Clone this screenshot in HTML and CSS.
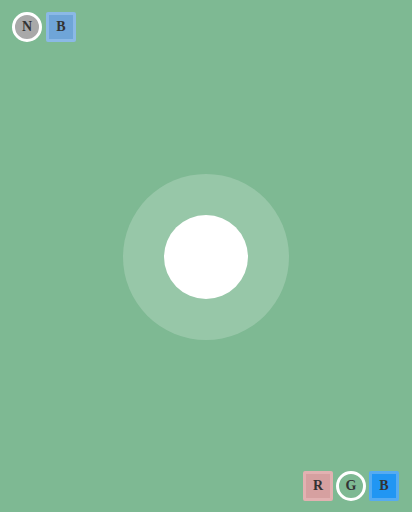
FILE: index.html
```html
<!DOCTYPE html>
<html>
<head>
<meta charset="utf-8">
<link rel="stylesheet" href="styles.css">
</head>
<body>
<div class="screen">
  <div class="toolbar toolbar-top">
    <div class="chip chip-round chip-grey">N</div>
    <div class="chip chip-square chip-steel">B</div>
  </div>
  <div class="stage">
    <div class="halo">
      <div class="dot"></div>
    </div>
  </div>
  <div class="toolbar toolbar-bottom">
    <div class="chip chip-square chip-rose">R</div>
    <div class="chip chip-round chip-clear">G</div>
    <div class="chip chip-square chip-blue">B</div>
  </div>
</div>
</body>
</html>
```
FILE: styles.css
```css
html, body {
  margin: 0;
  padding: 0;
}
body {
  background: #7eb993;
  font-family: "Liberation Serif", "Times New Roman", serif;
}
.screen {
  box-sizing: border-box;
  width: 412px;
  height: 512px;
  padding: 12px 12px 11px 12px;
  display: flex;
  flex-direction: column;
  justify-content: space-between;
}
.toolbar {
  display: flex;
  height: 30px;
}
.toolbar-top {
  gap: 4px;
}
.toolbar-bottom {
  gap: 3px;
  justify-content: flex-end;
  padding-right: 1px;
}
.chip {
  box-sizing: border-box;
  width: 30px;
  height: 30px;
  display: flex;
  align-items: center;
  justify-content: center;
  font-weight: bold;
  font-size: 14px;
  color: #333333;
  border: 3px solid transparent;
}
.chip-round {
  border-radius: 50%;
}
.chip-square {
  border-radius: 2px;
}
.chip-grey {
  background: #a9a9a9;
  border-color: #ffffff;
}
.chip-steel {
  background: #6fa5d8;
  border-color: #8bb9e6;
}
.chip-rose {
  background: #d6a0a0;
  border-color: #e2b1b1;
}
.chip-clear {
  background: transparent;
  border-color: #ffffff;
}
.chip-blue {
  background: #2196f3;
  border-color: #56abf1;
}
.stage {
  display: flex;
  justify-content: center;
}
.halo {
  width: 166px;
  height: 166px;
  border-radius: 50%;
  background: rgba(255, 255, 255, 0.2);
  display: flex;
  align-items: center;
  justify-content: center;
}
.dot {
  width: 84px;
  height: 84px;
  border-radius: 50%;
  background: #ffffff;
}
```
